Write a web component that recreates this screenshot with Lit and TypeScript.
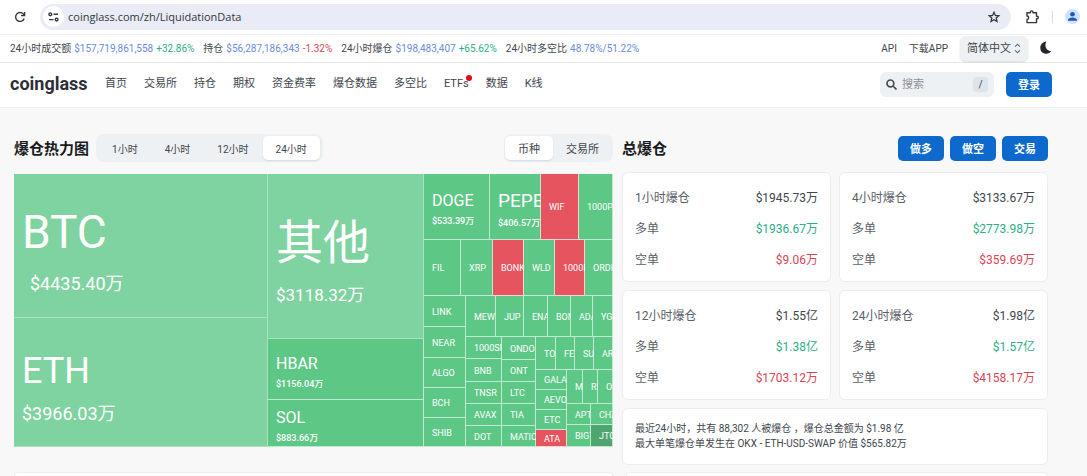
import { LitElement, html, css, nothing, TemplateResult } from "lit";
import { customElement, property, state } from "lit/decorators.js";
import { classMap } from "lit/directives/class-map.js";
import { styleMap } from "lit/directives/style-map.js";

type Node = {
  size: number;
  dir?: "row" | "column";
  kids?: Node[];
  name?: string;
  value?: string;
  kind?: string;
};

const row = (size: number, kids: Node[]): Node => ({ size, dir: "row", kids });
const col = (size: number, kids: Node[]): Node => ({ size, dir: "column", kids });
const leaf = (size: number, name: string, kind = "", value = ""): Node => ({ size, name, kind, value });

const TREE: Node = row(1, [
  col(254, [leaf(144, "BTC", "pale xl indent", "$4435.40万"), leaf(129, "ETH", "pale lg", "$3966.03万")]),
  col(156, [
    leaf(165, "其他", "pale xl rest", "$3118.32万"),
    leaf(61, "HBAR", "md", "$1156.04万"),
    leaf(47, "SOL", "md", "$883.66万"),
  ]),
  col(189, [
    row(66, [
      leaf(66, "DOGE", "md", "$533.39万"),
      leaf(51, "PEPE", "md2", "$406.57万"),
      leaf(38, "WIF", "red"),
      leaf(34, "1000PEPE"),
    ]),
    row(56, [
      leaf(37, "FIL"),
      leaf(32, "XRP"),
      leaf(31, "BONK", "red"),
      leaf(31, "WLD"),
      leaf(30, "1000BONK", "red"),
      leaf(28, "ORDI"),
    ]),
    row(151, [
      col(42, [leaf(31, "LINK"), leaf(31, "NEAR"), leaf(30, "ALGO"), leaf(30, "BCH"), leaf(29, "SHIB")]),
      col(147, [
        row(41, [leaf(30, "MEW"), leaf(28, "JUP"), leaf(24, "ENA"), leaf(23, "BOME"), leaf(22, "ADA"), leaf(20, "YGG")]),
        row(110, [
          col(36, [leaf(22, "1000SHIB"), leaf(23, "BNB"), leaf(22, "TNSR"), leaf(22, "AVAX"), leaf(21, "DOT")]),
          col(34, [leaf(23, "ONDO"), leaf(22, "ONT"), leaf(22, "LTC"), leaf(22, "TIA"), leaf(21, "MATIC")]),
          col(77, [
            row(33, [leaf(20, "TON"), leaf(19, "FET"), leaf(19, "SUI"), leaf(19, "ARB")]),
            row(77, [
              col(31, [leaf(20, "GALA"), leaf(20, "AEVO"), leaf(20, "ETC"), leaf(17, "ATA", "red")]),
              col(46, [
                row(34, [leaf(16, "MKR"), leaf(15, "RNDR"), leaf(15, "OP")]),
                row(21, [leaf(24, "APT"), leaf(22, "CHZ")]),
                row(22, [leaf(24, "BIGTIME"), leaf(22, "JTO", "dark")]),
              ]),
            ]),
          ]),
        ]),
      ]),
    ]),
  ]),
]);

@customElement("heat-map")
class HeatMap extends LitElement {
  static styles = css`
    :host { display: flex; height: 273px; overflow: hidden; color: #fff; }
    .group, .cell { display: flex; min-width: 0; min-height: 0; overflow: hidden; }
    .column { flex-direction: column; }
    .cell {
      flex-direction: column; justify-content: center; background: #5dc786;
      box-shadow: inset -1px -1px #bdead0; white-space: nowrap; font-size: 9px; line-height: 12px;
    }
    .name, .value { margin-left: 8px; }
    .pale { background: #7fd3a0; box-shadow: inset -1px -1px #a9e2bf; }
    .red { background: #e5545f; box-shadow: inset -1px -1px #f6d5cf; }
    .dark { background: #4ea570; }
    .value { font-weight: 500; }
    .md .name { font-size: 16px; line-height: 28px; }
    .md2 .name { font-size: 19px; line-height: 32px; }
    .xl .name { font-size: 46px; line-height: 80px; }
    .xl .value { margin-bottom: 4px; }
    .lg .name { font-size: 36px; line-height: 62px; }
    .xl .value, .lg .value { font-size: 18px; line-height: 24px; font-weight: 400; }
    .rest .name { font-size: 47px; }
    .rest .value { font-size: 17px; }
    .indent .value { margin-left: 16px; }
  `;

  private draw(n: Node): TemplateResult {
    const flex = styleMap({ flex: `${n.size} 1 0` });
    return n.kids
      ? html`<div class="group ${n.dir}" style=${flex}>${n.kids.map((k) => this.draw(k))}</div>`
      : html`<div class="cell ${n.kind}" style=${flex}>
          <span class="name">${n.name}</span>${n.value ? html`<span class="value">${n.value}</span>` : nothing}
        </div>`;
  }

  render() {
    return this.draw(TREE);
  }
}

@customElement("segment-bar")
class SegmentBar extends LitElement {
  @property({ attribute: false }) items: string[] = [];
  @property({ type: Number }) active = 0;
  @property({ type: Boolean, reflect: true }) large = false;

  static styles = css`
    :host { display: flex; gap: 1px; padding: 2px 3px; border-radius: 8px; background: #eef1f4; font-size: 10px; }
    :host([large]) { gap: 0; padding: 2px 1px; font-size: 11px; }
    button {
      font: inherit; color: #41454d; height: 24px; padding: 0 13px; border: 0; border-radius: 5px;
      background: transparent; white-space: nowrap; cursor: pointer;
    }
    .on { background: #fff; box-shadow: 0 1px 2px #1018281a; }
  `;

  render() {
    return this.items.map(
      (t, i) => html`<button class=${classMap({ on: i === this.active })} aria-pressed=${i === this.active}
        @click=${() => (this.active = i)}>${t}</button>`
    );
  }
}

@customElement("app-root")
class AppRoot extends LitElement {
  @state() private url = "coinglass.com/zh/LiquidationData";

  static styles = css`
    :host {
      display: flex; flex-direction: column; height: 100vh; overflow: hidden; background: #f8f8f9;
      color: #41454d; font-family: Roboto, "Noto Sans CJK SC", sans-serif; font-size: 11px;
    }
    * { box-sizing: border-box; }
    a { color: inherit; text-decoration: none; }
    svg { display: block; flex: none; }
    button, input, select { font: inherit; color: inherit; }

    .browser {
      display: flex; align-items: center; height: 35px; padding: 0 7px 1px 14px; background: #fff;
      border-bottom: 1px solid #f0f1f3; color: #33363b;
    }
    .icon { display: grid; place-items: center; padding: 0; border: 0; background: none; }
    .address {
      display: flex; flex: 1; align-items: center; height: 26px; margin: 0 14px; padding: 0 10px 0 3px;
      border-radius: 13px; background: #e9ecf6;
    }
    .site { width: 21px; height: 21px; border-radius: 50%; background: #fff; }
    .url {
      flex: 1; min-width: 0; margin-left: 4px; padding: 0; border: 0; outline: 0; background: none;
      font-family: "Open Sans", sans-serif; font-size: 11px;
    }
    .rule { width: 1px; height: 12px; margin: 0 12px; background: #cfdcf2; }

    .ticker {
      display: flex; align-items: center; height: 28px; padding: 0 35px 0 10px; background: #fff;
      border-bottom: 1px solid #e6e8eb; font-size: 10px; line-height: 16px; white-space: nowrap;
    }
    .stats { display: flex; gap: 9px; flex: 1; }
    .stat { display: flex; align-items: baseline; gap: 3px; }
    .blue { color: #6d8be0; }
    .green { color: #2fae87; }
    .red { color: #dc4556; }
    .tools { display: flex; align-items: baseline; gap: 12px; }
    .tools .icon { align-self: center; }
    .lang {
      display: flex; align-items: center; height: 25px; padding: 0 6px 0 7px; border-radius: 6px;
      background: #eef1f4; box-shadow: 0 1px 2px #10182826; font-size: 11px;
    }
    .lang select { appearance: none; width: 46px; padding: 0; border: 0; outline: 0; background: none; }

    .nav {
      display: flex; align-items: center; height: 45px; padding: 0 35px 2px 10px; background: #fff;
      border-bottom: 1px solid #eff0f2; white-space: nowrap;
    }
    .logo { width: 95px; font-size: 18px; line-height: 24px; font-weight: 700; color: #2c2f37; }
    .links { display: flex; flex: 1; align-items: baseline; gap: 17px; line-height: 16px; }
    .hot { position: relative; }
    .hot::after {
      content: ""; position: absolute; right: -3px; top: -1px; width: 6px; height: 6px;
      border-radius: 50%; background: #e30613;
    }
    .search {
      display: flex; align-items: center; gap: 5px; width: 114px; height: 25px; margin-right: 12px; padding: 0 6px;
      border-radius: 6px; background: #eef1f4;
    }
    .search input { flex: 1; width: 20px; padding: 0; border: 0; outline: 0; background: none; }
    .search input::placeholder { color: #8d9299; opacity: 1; }
    kbd {
      width: 15px; height: 15px; border-radius: 3px; background: #dde5ec; font: inherit; font-size: 10px;
      line-height: 15px; text-align: center;
    }
    .primary {
      width: 46px; height: 25px; padding: 0; border: 0; border-radius: 5px; background: #0d69cc; color: #fff;
      font-weight: 700; cursor: pointer;
    }

    .main {
      display: grid; flex: 1; grid-template-columns: 599fr 426fr; grid-template-rows: auto 1fr; gap: 7px 9px;
      padding: 26px 39px 0 14px;
    }
    .head { display: flex; align-items: center; gap: 7px; height: 28px; margin-bottom: 12px; }
    .side .head { gap: 6px; margin-bottom: 10px; }
    h2 { margin: 0; padding-top: 2px; font-size: 15px; line-height: 24px; font-weight: 700; color: #191b20; }
    .push { margin-left: auto; }
    .cards { display: grid; grid-template-columns: 1fr 1fr; gap: 8px; }
    .card { background: #fff; border: 1px solid #ebedef; border-radius: 6px; }
    .totals { margin: 0; padding: 10px 12px 5px; font-size: 12px; line-height: 31px; }
    .line { display: flex; justify-content: space-between; }
    dt { color: #5b6068; }
    dd { margin: 0; }
    .note { grid-column: 1 / -1; margin: 0; padding: 12px 12px 13px; font-size: 10px; line-height: 15px; }
    .open { border-bottom: 0; border-radius: 6px 6px 0 0; }
    .open + .open { margin-left: 4px; }
  `;

  private stat(label: string, value: string, change = "", tone = "") {
    return html`<div class="stat"><span>${label}</span><span class="blue">${value}</span>
      ${change ? html`<span class=${tone}>${change}</span>` : nothing}</div>`;
  }

  private totals(span: string, all: string, long: string, short: string) {
    return html`<dl class="card totals">
      <div class="line"><dt>${span}爆仓</dt><dd>${all}</dd></div>
      <div class="line"><dt>多单</dt><dd class="green">${long}</dd></div>
      <div class="line"><dt>空单</dt><dd class="red">${short}</dd></div>
    </dl>`;
  }

  render() {
    return html`
      <div class="browser">
        <button class="icon" aria-label="重新加载">
          <svg width="12" height="12" viewBox="0 0 12 12" fill="none" stroke="currentColor" stroke-width="1.4">
            <path d="M10.2 7.4A4.4 4.4 0 1 1 9.4 3.1L10.3 4" /><path d="M10.6 1v3.6H7" />
          </svg>
        </button>
        <div class="address">
          <button class="icon site" aria-label="网站信息">
            <svg width="11" height="10" viewBox="0 0 11 10" fill="none" stroke="currentColor" stroke-width="1.4">
              <circle cx="2.3" cy="2.3" r="1.4" /><path d="M5.5 2.3H10M1 7.6h4.5" /><circle cx="8.6" cy="7.6" r="1.4" />
            </svg>
          </button>
          <input class="url" aria-label="地址" .value=${this.url} />
          <button class="icon" aria-label="收藏">
            <svg width="14" height="14" viewBox="0 0 14 14" fill="none" stroke="currentColor" stroke-width="1.3">
              <path d="M7 2.300l1.400 3.200 3.400.3-2.600 2.300.8 3.400L7 9.700l-3 1.800.8-3.400-2.600-2.300 3.400-.3z" />
            </svg>
          </button>
        </div>
        <button class="icon" aria-label="扩展程序">
          <svg width="15" height="14" viewBox="0 0 15 14" fill="none" stroke="currentColor" stroke-width="1.4" stroke-linejoin="round">
            <path d="M2 2.800h3.400V2.200a1.300 1.300 0 0 1 2.600 0v.6h3.500v3.400h.5a1.300 1.300 0 0 1 0 2.600h-.5v3.800H2V9.400a1.700 1.700 0 0 0 0-3.400z" />
          </svg>
        </button>
        <span class="rule"></span>
        <button class="icon" aria-label="个人资料">
          <svg width="15" height="15" viewBox="0 0 15 15">
            <circle cx="7.5" cy="7.5" r="7.5" fill="#cfe2fc" /><circle cx="7.5" cy="5.2" r="2.3" fill="#1b56c2" />
            <path d="M3 11.800V11c0-1.700 2.400-2.600 4.500-2.600S12 9.300 12 11v.8z" fill="#1b56c2" />
          </svg>
        </button>
      </div>

      <div class="ticker">
        <div class="stats">
          ${this.stat("24小时成交额", "$157,719,861,558", "+32.86%", "green")}
          ${this.stat("持仓", "$56,287,186,343", "-1.32%", "red")}
          ${this.stat("24小时爆仓", "$198,483,407", "+65.62%", "green")}
          ${this.stat("24小时多空比", "48.78%/51.22%")}
        </div>
        <div class="tools">
          <a href="#api">API</a>
          <a href="#app">下载APP</a>
          <label class="lang">
            <select aria-label="语言"><option>简体中文</option></select>
            <svg width="9" height="11" viewBox="0 0 9 11" fill="none" stroke="#6a6f77" stroke-width="1.1">
              <path d="M2 3.600L4.500 1.300L7 3.600M2 7.400L4.500 9.700L7 7.400" />
            </svg>
          </label>
          <button class="icon" aria-label="深色模式">
            <svg width="12" height="16" viewBox="0 0 12 16" fill="#24262e">
              <path d="M6.300.5C2.800.9.300 3.500.300 6.700a6 6 0 0 0 11 3.400C7.200 10.300 3.800 5.600 6.300.5z" />
            </svg>
          </button>
        </div>
      </div>

      <header class="nav">
        <a class="logo" href="#home">coinglass</a>
        <nav class="links">
          ${["首页", "交易所", "持仓", "期权", "资金费率", "爆仓数据", "多空比", "ETFs", "数据", "K线"].map(
            (t) => html`<a href="#${t}" class=${classMap({ hot: t === "ETFs" })}>${t}</a>`
          )}
        </nav>
        <label class="search">
          <svg width="11" height="11" viewBox="0 0 11 11" fill="none" stroke="#4a4e56" stroke-width="1.7">
            <circle cx="4.400" cy="4.400" r="3.400" /><path d="M7 7l3.500 3.500" />
          </svg>
          <input type="text" placeholder="搜索" aria-label="搜索" />
          <kbd>/</kbd>
        </label>
        <button class="primary">登录</button>
      </header>

      <main class="main">
        <section>
          <div class="head">
            <h2>爆仓热力图</h2>
            <segment-bar .items=${["1小时", "4小时", "12小时", "24小时"]} .active=${3}></segment-bar>
            <segment-bar class="push" large .items=${["币种", "交易所"]}></segment-bar>
          </div>
          <heat-map></heat-map>
        </section>
        <section class="side">
          <div class="head">
            <h2>总爆仓</h2>
            <button class="primary push">做多</button>
            <button class="primary">做空</button>
            <button class="primary">交易</button>
          </div>
          <div class="cards">
            ${this.totals("1小时", "$1945.73万", "$1936.67万", "$9.06万")}
            ${this.totals("4小时", "$3133.67万", "$2773.98万", "$359.69万")}
            ${this.totals("12小时", "$1.55亿", "$1.38亿", "$1703.12万")}
            ${this.totals("24小时", "$1.98亿", "$1.57亿", "$4158.17万")}
            <p class="card note">
              最近24小时，共有 88,302 人被爆仓 ，爆仓总金额为 $1.98 亿<br />
              最大单笔爆仓单发生在 OKX - ETH-USD-SWAP 价值 $565.82万
            </p>
          </div>
        </section>
        <div class="card open"></div>
        <div class="card open"></div>
      </main>
    `;
  }
}
